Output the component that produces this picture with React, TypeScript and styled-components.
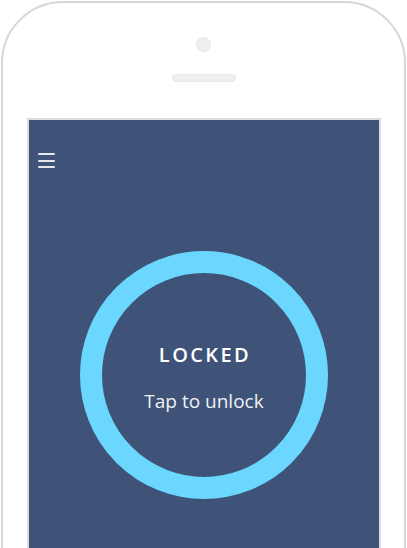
import React from "react";
import styled, { createGlobalStyle } from "styled-components";

const Global = createGlobalStyle`
  html, body { margin: 0; padding: 0; background: #ffffff; overflow: hidden; }
  body { font-family: "Open Sans", "Liberation Sans", sans-serif; }
`;

const Phone = styled.div`
  box-sizing: border-box;
  width: 405px;
  height: 640px;
  margin: 1px 0 0 1px;
  border: 2px solid #d6d6d6;
  border-radius: 62px;
  display: flex;
  flex-direction: column;
  align-items: center;
  background: #fff;
`;

const Camera = styled.div`
  box-sizing: border-box;
  width: 15px;
  height: 15px;
  margin-top: 34px;
  border-radius: 50%;
  background: #efefef;
  border: 1px solid #e6e6e6;
`;

const Speaker = styled.div`
  box-sizing: border-box;
  width: 64px;
  height: 8px;
  margin-top: 22px;
  border-radius: 4px;
  background: #efefef;
  border: 1px solid #e6e6e6;
`;

const Screen = styled.div`
  box-sizing: border-box;
  width: 354px;
  height: 480px;
  margin-top: 36px;
  margin-left: 1px;
  border: 2px solid #dcdcdc;
  background: #3e5377;
  display: flex;
  flex-direction: column;
  align-items: center;
`;

const Toolbar = styled.div`
  align-self: stretch;
  display: flex;
  padding: 33px 0 0 9px;
  height: 100px;
  box-sizing: border-box;
`;

const Burger = styled.button`
  width: 17px;
  height: 15px;
  padding: 0;
  border: none;
  background: transparent;
  display: flex;
  flex-direction: column;
  justify-content: space-between;
  cursor: pointer;
`;

const BurgerLine = styled.span`
  display: block;
  height: 2px;
  width: 100%;
  background: #e4e7ee;
  border-radius: 1px;
`;

const Ring = styled.div`
  box-sizing: border-box;
  margin-top: 31px;
  width: 248px;
  height: 248px;
  border-radius: 50%;
  border: 22px solid #6bd7fe;
  display: flex;
  flex-direction: column;
  align-items: center;
  cursor: pointer;
`;

const Status = styled.div`
  margin-top: 70px;
  padding-left: 2px;
  font-family: "Open Sans", sans-serif;
  font-size: 20px;
  font-weight: 600;
  letter-spacing: 2.4px;
  line-height: 24px;
  color: #ffffff;
`;

const Hint = styled.div`
  margin-top: 21px;
  font-family: "Open Sans", sans-serif;
  font-size: 19px;
  font-weight: 400;
  line-height: 26px;
  color: #eef1f6;
`;

export default function App() {
  return (
    <>
      <Global />
      <Phone>
        <Camera />
        <Speaker />
        <Screen>
          <Toolbar>
            <Burger aria-label="Menu">
              <BurgerLine />
              <BurgerLine />
              <BurgerLine />
            </Burger>
          </Toolbar>
          <Ring>
            <Status>LOCKED</Status>
            <Hint>Tap to unlock</Hint>
          </Ring>
        </Screen>
      </Phone>
    </>
  );
}
